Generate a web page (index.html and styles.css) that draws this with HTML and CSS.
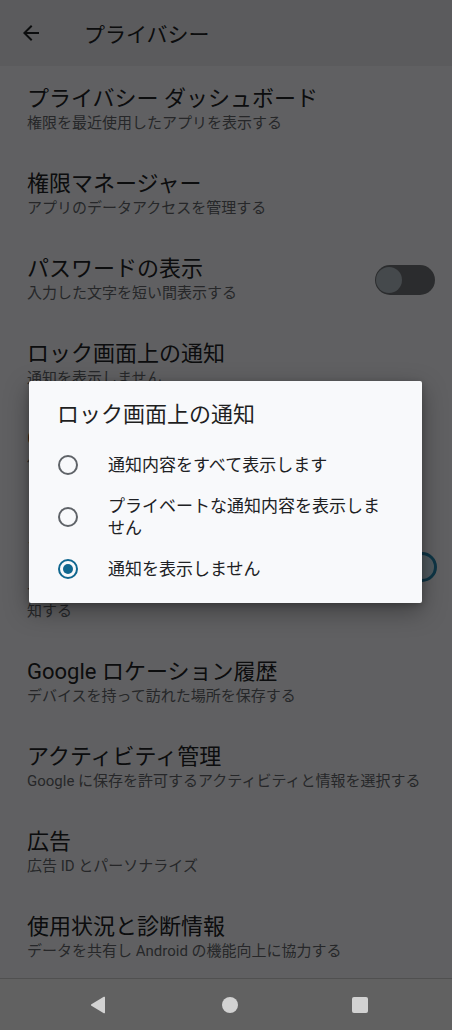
FILE: index.html
```html
<!DOCTYPE html>
<html lang="ja">
    <head>
        <meta charset="UTF-8">
        <title>プライバシー</title>
        <link rel="stylesheet" href="styles.css">
    </head>
    <body>
        <div class="screen">
            <header class="app-bar">
                <svg class="back" viewBox="0 0 24 24" width="24" height="24">
                    <path d="M20 11H7.83l5.59-5.59L12 4l-8 8 8 8 1.41-1.41L7.83 13H20v-2z"/>
                </svg>
                <h1>プライバシー</h1>
            </header>

            <main class="list">
                <div class="item">
                    <div class="text">
                        <div class="title">プライバシー ダッシュボード</div>
                        <div class="summary">権限を最近使用したアプリを表示する</div>
                    </div>
                </div>
                <div class="item">
                    <div class="text">
                        <div class="title">権限マネージャー</div>
                        <div class="summary">アプリのデータアクセスを管理する</div>
                    </div>
                </div>
                <div class="item">
                    <div class="text">
                        <div class="title">パスワードの表示</div>
                        <div class="summary">入力した文字を短い間表示する</div>
                    </div>
                    <span class="switch"><span class="thumb"></span></span>
                </div>
                <div class="item">
                    <div class="text">
                        <div class="title">ロック画面上の通知</div>
                        <div class="summary">通知を表示しません</div>
                    </div>
                </div>
                <div class="item">
                    <div class="text">
                        <div class="title">Google の自動入力サービス</div>
                        <div class="summary">保存したパスワード、クレジットカード、住所</div>
                    </div>
                </div>
                <div class="item">
                    <div class="text">
                        <div class="title">クリップボードのアクセスを表示</div>
                        <div class="summary">アプリがコピーしたテキスト、画像、その他のコンテンツにアクセスしたときに、画面下部にメッセージを表示して通<br>知する</div>
                    </div>
                    <span class="switch on"><span class="thumb"></span></span>
                </div>
                <div class="item">
                    <div class="text">
                        <div class="title">Google ロケーション履歴</div>
                        <div class="summary">デバイスを持って訪れた場所を保存する</div>
                    </div>
                </div>
                <div class="item">
                    <div class="text">
                        <div class="title">アクティビティ管理</div>
                        <div class="summary">Google に保存を許可するアクティビティと情報を選択する</div>
                    </div>
                </div>
                <div class="item">
                    <div class="text">
                        <div class="title">広告</div>
                        <div class="summary">広告 ID とパーソナライズ</div>
                    </div>
                </div>
                <div class="item">
                    <div class="text">
                        <div class="title">使用状況と診断情報</div>
                        <div class="summary">データを共有し Android の機能向上に協力する</div>
                    </div>
                </div>
            </main>

            <div class="scrim"></div>

            <div class="dialog">
                <h2>ロック画面上の通知</h2>
                <label class="option">
                    <span class="radio"></span>
                    <span class="label">通知内容をすべて表示します</span>
                </label>
                <label class="option">
                    <span class="radio"></span>
                    <span class="label">プライベートな通知内容を表示しません</span>
                </label>
                <label class="option">
                    <span class="radio checked"></span>
                    <span class="label">通知を表示しません</span>
                </label>
            </div>

            <nav class="nav-bar">
                <svg viewBox="0 0 16 18" width="16" height="18">
                    <path d="M15 1.5v15a0.8 0.8 0 0 1-1.2 0.7L1.4 9.7a0.8 0.8 0 0 1 0-1.4L13.8 0.8A0.8 0.8 0 0 1 15 1.5z"/>
                </svg>
                <span class="home"></span>
                <span class="recents"></span>
            </nav>
        </div>
    </body>
</html>
```

FILE: styles.css
```css
body {
    margin: 0;
    font-family: Roboto, "Noto Sans CJK JP", sans-serif;
    background: #606062;
}

.screen {
    position: relative;
    display: flex;
    flex-direction: column;
    width: 452px;
    height: 1030px;
    overflow: hidden;
    background: #f1f1f4;
}

.app-bar {
    display: flex;
    align-items: center;
    height: 66px;
    padding-left: 19px;
    background: #e3e4e8;
    flex-shrink: 0;

    .back {
        fill: #202124;
    }

    h1 {
        margin: 0 0 0 41px;
        font-size: 21px;
        font-weight: 400;
        color: #202124;
    }
}

.list {
    flex: 1;
    overflow: hidden;
}

.item {
    display: flex;
    align-items: center;
    padding: 20px 17px 17px 27px;

    .text {
        flex: 1;
        min-width: 0;
    }

    .title {
        font-size: 22px;
        line-height: 26px;
        color: #202124;
        white-space: nowrap;
    }

    .summary {
        margin-top: 1px;
        font-size: 15px;
        line-height: 21px;
        color: #5f6368;
    }
}

.switch {
    position: relative;
    flex-shrink: 0;
    width: 60px;
    height: 30px;
    margin-left: 16px;
    border-radius: 15px;
    background: #6c6f73;

    .thumb {
        position: absolute;
        top: 2px;
        left: 1px;
        width: 26px;
        height: 26px;
        border-radius: 50%;
        background: #adb6bd;
    }
}

.switch.on {
    background: #9fc3d6;

    .thumb {
        top: 0;
        left: 32px;
        width: 24px;
        height: 24px;
        border: 3px solid #2384ac;
        background: #c8e1ed;
    }
}

.scrim {
    position: absolute;
    top: 0;
    left: 0;
    right: 0;
    bottom: 52px;
    background: rgba(0, 0, 0, 0.6);
}

.dialog {
    position: absolute;
    top: 381px;
    left: 29px;
    width: 393px;
    box-sizing: border-box;
    padding: 20px 27px 10px 28px;
    background: #f8f9fb;
    border-radius: 2px;
    box-shadow: 0 8px 24px rgba(0, 0, 0, 0.35), 0 2px 6px rgba(0, 0, 0, 0.2);

    h2 {
        margin: 0 0 12px;
        font-size: 22px;
        line-height: 28px;
        font-weight: 400;
        color: #1f1f1f;
    }

    .option {
        display: flex;
        align-items: center;
        min-height: 48px;
        padding: 6px 0;
        box-sizing: border-box;
    }

    .radio {
        flex-shrink: 0;
        width: 16px;
        height: 16px;
        margin-left: 1px;
        border: 2px solid #5f6368;
        border-radius: 50%;
        display: flex;
        align-items: center;
        justify-content: center;
    }

    .radio.checked {
        border-color: #10678f;

        &::after {
            content: "";
            width: 10px;
            height: 10px;
            border-radius: 50%;
            background: #10678f;
        }
    }

    .label {
        margin-left: 30px;
        font-size: 17px;
        line-height: 22px;
        color: #202124;
    }
}

.nav-bar {
    position: relative;
    display: flex;
    align-items: center;
    height: 51px;
    flex-shrink: 0;
    background: #616161;
    border-top: 1px solid #505050;

    svg {
        fill: #d2d2d2;
        margin-left: 90px;
    }

    .home {
        width: 16px;
        height: 16px;
        margin-left: 116px;
        border-radius: 50%;
        background: #d2d2d2;
    }

    .recents {
        width: 16px;
        height: 16px;
        margin-left: 114px;
        border-radius: 2px;
        background: #d2d2d2;
    }
}
```
